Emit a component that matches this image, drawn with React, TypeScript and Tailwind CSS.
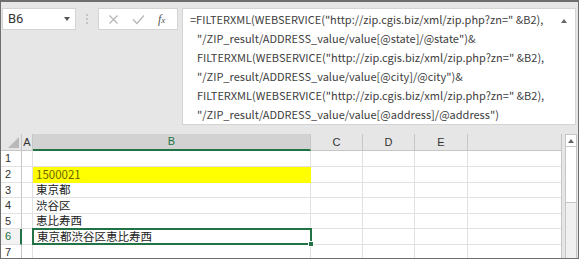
import React from "react";

const formulaLines = [
  '=FILTERXML(WEBSERVICE("http://zip.cgis.biz/xml/zip.php?zn=" &B2),',
  '"/ZIP_result/ADDRESS_value/value[@state]/@state")&',
  'FILTERXML(WEBSERVICE("http://zip.cgis.biz/xml/zip.php?zn=" &B2),',
  '"/ZIP_result/ADDRESS_value/value[@city]/@city")&',
  'FILTERXML(WEBSERVICE("http://zip.cgis.biz/xml/zip.php?zn=" &B2),',
  '"/ZIP_result/ADDRESS_value/value[@address]/@address")',
];

const rows = [
  { n: 1, h: "h-[16px]", b: "" },
  { n: 2, h: "h-[16px]", b: "1500021" },
  { n: 3, h: "h-[15px]", b: "東京都" },
  { n: 4, h: "h-[16px]", b: "渋谷区" },
  { n: 5, h: "h-[15px]", b: "恵比寿西" },
  { n: 6, h: "h-[16px]", b: "東京都渋谷区恵比寿西" },
  { n: 7, h: "h-[16px]", b: "" },
];

const cols = [
  { key: "C", w: "w-[52px]" },
  { key: "D", w: "w-[52px]" },
  { key: "E", w: "w-[53px]" },
];

const cellB = (n: number) => {
  if (n === 2) return "bg-[#ffff00] text-[#6b6400] border-r border-b border-[#ffff00]";
  if (n === 6) return "relative z-10 -ml-[1px] -mt-[1px] h-[calc(100%+1px)] w-[280px] border-2 border-[#217346] pl-[2px] text-[#222]";
  return "border-r border-b border-[#e1e1e1] text-[#222]";
};

export default function App() {
  return (
    <div className="w-[579px] h-[259px] overflow-hidden bg-[#e6e6e6] border border-[#6e6e6e] border-t-2 font-['Noto_Sans_CJK_JP',sans-serif]">
      {/* formula bar */}
      <div className="flex items-start pt-[6px] pl-[1px] pr-[2px]">
        <div className="w-[74px] h-[22px] bg-white border border-[#d4d4d4] flex items-center justify-between pl-[5px] pr-[5px]">
          <span className="text-[13px] text-[#333] font-['Roboto',sans-serif]">B6</span>
          <span className="w-0 h-0 border-l-[3px] border-r-[3px] border-t-[4px] border-l-transparent border-r-transparent border-t-[#555]" />
        </div>
        <div className="w-[22px] h-[22px] flex flex-col items-center justify-center gap-[2px]">
          <span className="w-[2px] h-[2px] bg-[#c4c4c4]" />
          <span className="w-[2px] h-[2px] bg-[#c4c4c4]" />
          <span className="w-[2px] h-[2px] bg-[#c4c4c4]" />
        </div>
        <div className="w-[80px] h-[22px] bg-white border border-[#d4d4d4] flex items-center pl-[9px] gap-[13px]">
          <svg width="11" height="11" viewBox="0 0 11 11">
            <path d="M1.5 1.5 L9.5 9.5 M9.5 1.5 L1.5 9.5" stroke="#b5b5b5" strokeWidth="1.2" />
          </svg>
          <svg width="13" height="11" viewBox="0 0 13 11">
            <path d="M1 5.5 L5 9.5 L12 1.5" stroke="#b5b5b5" strokeWidth="1.2" fill="none" />
          </svg>
          <span className="text-[12px] italic text-[#555] font-['Liberation_Serif',serif] leading-none">
            f<span className="text-[9px]">x</span>
          </span>
        </div>
        <div className="ml-[4px] flex-1 h-[117px] bg-white border border-[#d4d4d4] flex justify-between pl-[7px] pr-[8px] pt-[1px]">
          <div className="text-[11px] leading-[19px] text-[#404040] whitespace-pre">
            {formulaLines.map((l, i) => (
              <div key={i} className={i > 0 ? "pl-[7px]" : ""}>
                {l}
              </div>
            ))}
          </div>
          <span className="mt-[9px] w-0 h-0 border-l-[3px] border-r-[3px] border-b-[4px] border-l-transparent border-r-transparent border-b-[#666]" />
        </div>
      </div>

      {/* sheet */}
      <div className="mt-[9px] flex">
        <div className="w-[561px] bg-white border-r border-[#c6c6c6] text-[#333]">
          {/* header */}
          <div className="flex h-[17px] bg-[#e6e6e6] text-[11px] font-['Liberation_Sans',sans-serif]">
            <div className="w-[21px] border-r border-b border-[#c6c6c6] flex items-end justify-end p-[2px]">
              <svg width="11" height="11" viewBox="0 0 11 11">
                <path d="M11 0 L11 11 L0 11 Z" fill="#b9b9b9" />
              </svg>
            </div>
            <div className="w-[11px] border-r border-b border-[#c6c6c6] flex items-center justify-center">A</div>
            <div className="w-[278px] bg-[#d2d2d2] border-r border-[#c6c6c6] border-b-2 border-b-[#217346] flex items-center justify-center text-[#217346]">
              B
            </div>
            {cols.map((c) => (
              <div key={c.key} className={`${c.w} border-r border-b border-[#c6c6c6] flex items-center justify-center`}>
                {c.key}
              </div>
            ))}
            <div className="flex-1 border-b border-[#c6c6c6]" />
          </div>
          {/* rows */}
          {rows.map((r) => (
            <div key={r.n} className={`flex ${r.h}`}>
              <div
                className={`w-[21px] border-b border-[#e1e1e1] flex items-center pl-[4px] text-[11px] font-['Liberation_Sans',sans-serif] ${
                  r.n === 6 ? "border-r-2 border-r-[#217346] text-[#217346] bg-[#f3f3f3]" : "border-r border-r-[#c6c6c6]"
                }`}
              >
                {r.n}
              </div>
              <div className="w-[11px] border-r border-b border-[#e1e1e1]" />
              <div className={`w-[278px] shrink-0 flex items-center pl-[3px] text-[11.5px] ${cellB(r.n)}`}>
                {r.b}
                {r.n === 6 && (
                  <span className="absolute -right-[4px] -bottom-[4px] w-[6px] h-[6px] bg-[#217346] border border-white" />
                )}
              </div>
              {cols.map((c, i) => (
                <div
                  key={c.key}
                  className={`${c.w} shrink-0 border-r border-b border-[#e1e1e1] ${r.n === 6 && i === 0 ? "-ml-[1px]" : ""}`}
                />
              ))}
              <div className="flex-1 border-b border-[#e1e1e1]" />
            </div>
          ))}
        </div>
        {/* scrollbar */}
        <div className="ml-[3px] w-[12px] h-[140px] bg-[#f0f0f0] border border-[#c6c6c6] flex flex-col">
          <div className="h-[12px] bg-white border-b border-[#c6c6c6] flex items-center justify-center">
            <span className="w-0 h-0 border-l-[3px] border-r-[3px] border-b-[4px] border-l-transparent border-r-transparent border-b-[#666]" />
          </div>
          <div className="h-[56px] bg-white border-b border-[#c6c6c6]" />
        </div>
      </div>
    </div>
  );
}
